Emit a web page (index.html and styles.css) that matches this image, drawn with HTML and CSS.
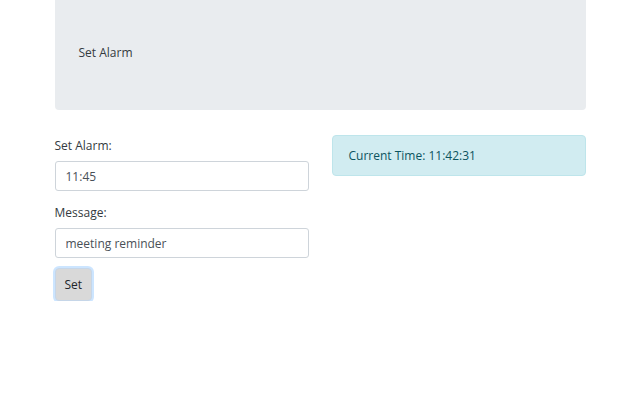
FILE: index.html
```html
<!DOCTYPE html>
<html lang="en">
<head>
    <meta charset="UTF-8">
    <meta name="viewport" content="width=device-width, initial-scale=1.0">
    <title>Alarm Clock</title>
    <link rel="stylesheet" href="styles.css">
</head>
<body>

    <div class="container">
        <!-- Header -->
        <div class="jumbotron">
            <p>Set Alarm</p>
        </div>

        <div class="row">
            <!-- Alarm form -->
            <div class="col">
                <div class="form-group">
                    <label for="alarmTime">Set Alarm:</label>
                    <input type="text" id="alarmTime" value="11:45">
                </div>
                <div class="form-group">
                    <label for="alarmMessage">Message:</label>
                    <input type="text" id="alarmMessage" value="meeting reminder">
                </div>
                <button class="btn-set">Set</button>
            </div>

            <!-- Clock -->
            <div class="col">
                <div class="alert-info">Current Time: 11:42:31</div>
            </div>
        </div>
    </div>

</body>
</html>
```
FILE: styles.css
```css
body {
    font-family: "Open Sans", "Noto Sans", sans-serif;
    font-size: 12px;
    color: #212529;
    background-color: #fff;
    margin: 0;
}
.container {
    width: 531px;
    margin: 0 auto;
}
.jumbotron {
    background-color: #e9ecef;
    border-radius: 0 0 4px 4px;
    height: 110px;
    padding: 0 24px;
    display: flex;
    align-items: center;
    margin-bottom: 25px;
    box-sizing: border-box;
}
.jumbotron p {
    margin: 0 0 6px 0;
    color: #343a40;
}
.row {
    display: flex;
    gap: 23px;
}
.col {
    flex: 1;
}
.form-group {
    margin-bottom: 13px;
}
.form-group label {
    display: block;
    margin: 2px 0 7px 0;
    color: #343a40;
}
.form-group input {
    width: 100%;
    box-sizing: border-box;
    height: 30px;
    padding: 4px 10px;
    border: 1px solid #ced4da;
    border-radius: 3px;
    font-family: inherit;
    font-size: 12px;
    color: #495057;
}
.btn-set {
    padding: 7px 9px;
    background-color: #d9d9d9;
    border: 1px solid #c6d6e8;
    border-radius: 4px;
    box-shadow: 0 0 0 2px rgba(0, 123, 255, 0.2);
    font-family: inherit;
    font-size: 12px;
    color: #212529;
    margin-top: -3px;
}
.alert-info {
    background-color: #d1ecf1;
    border: 1px solid #bee5eb;
    border-radius: 4px;
    color: #0c5460;
    padding: 11px 16px;
}
```
